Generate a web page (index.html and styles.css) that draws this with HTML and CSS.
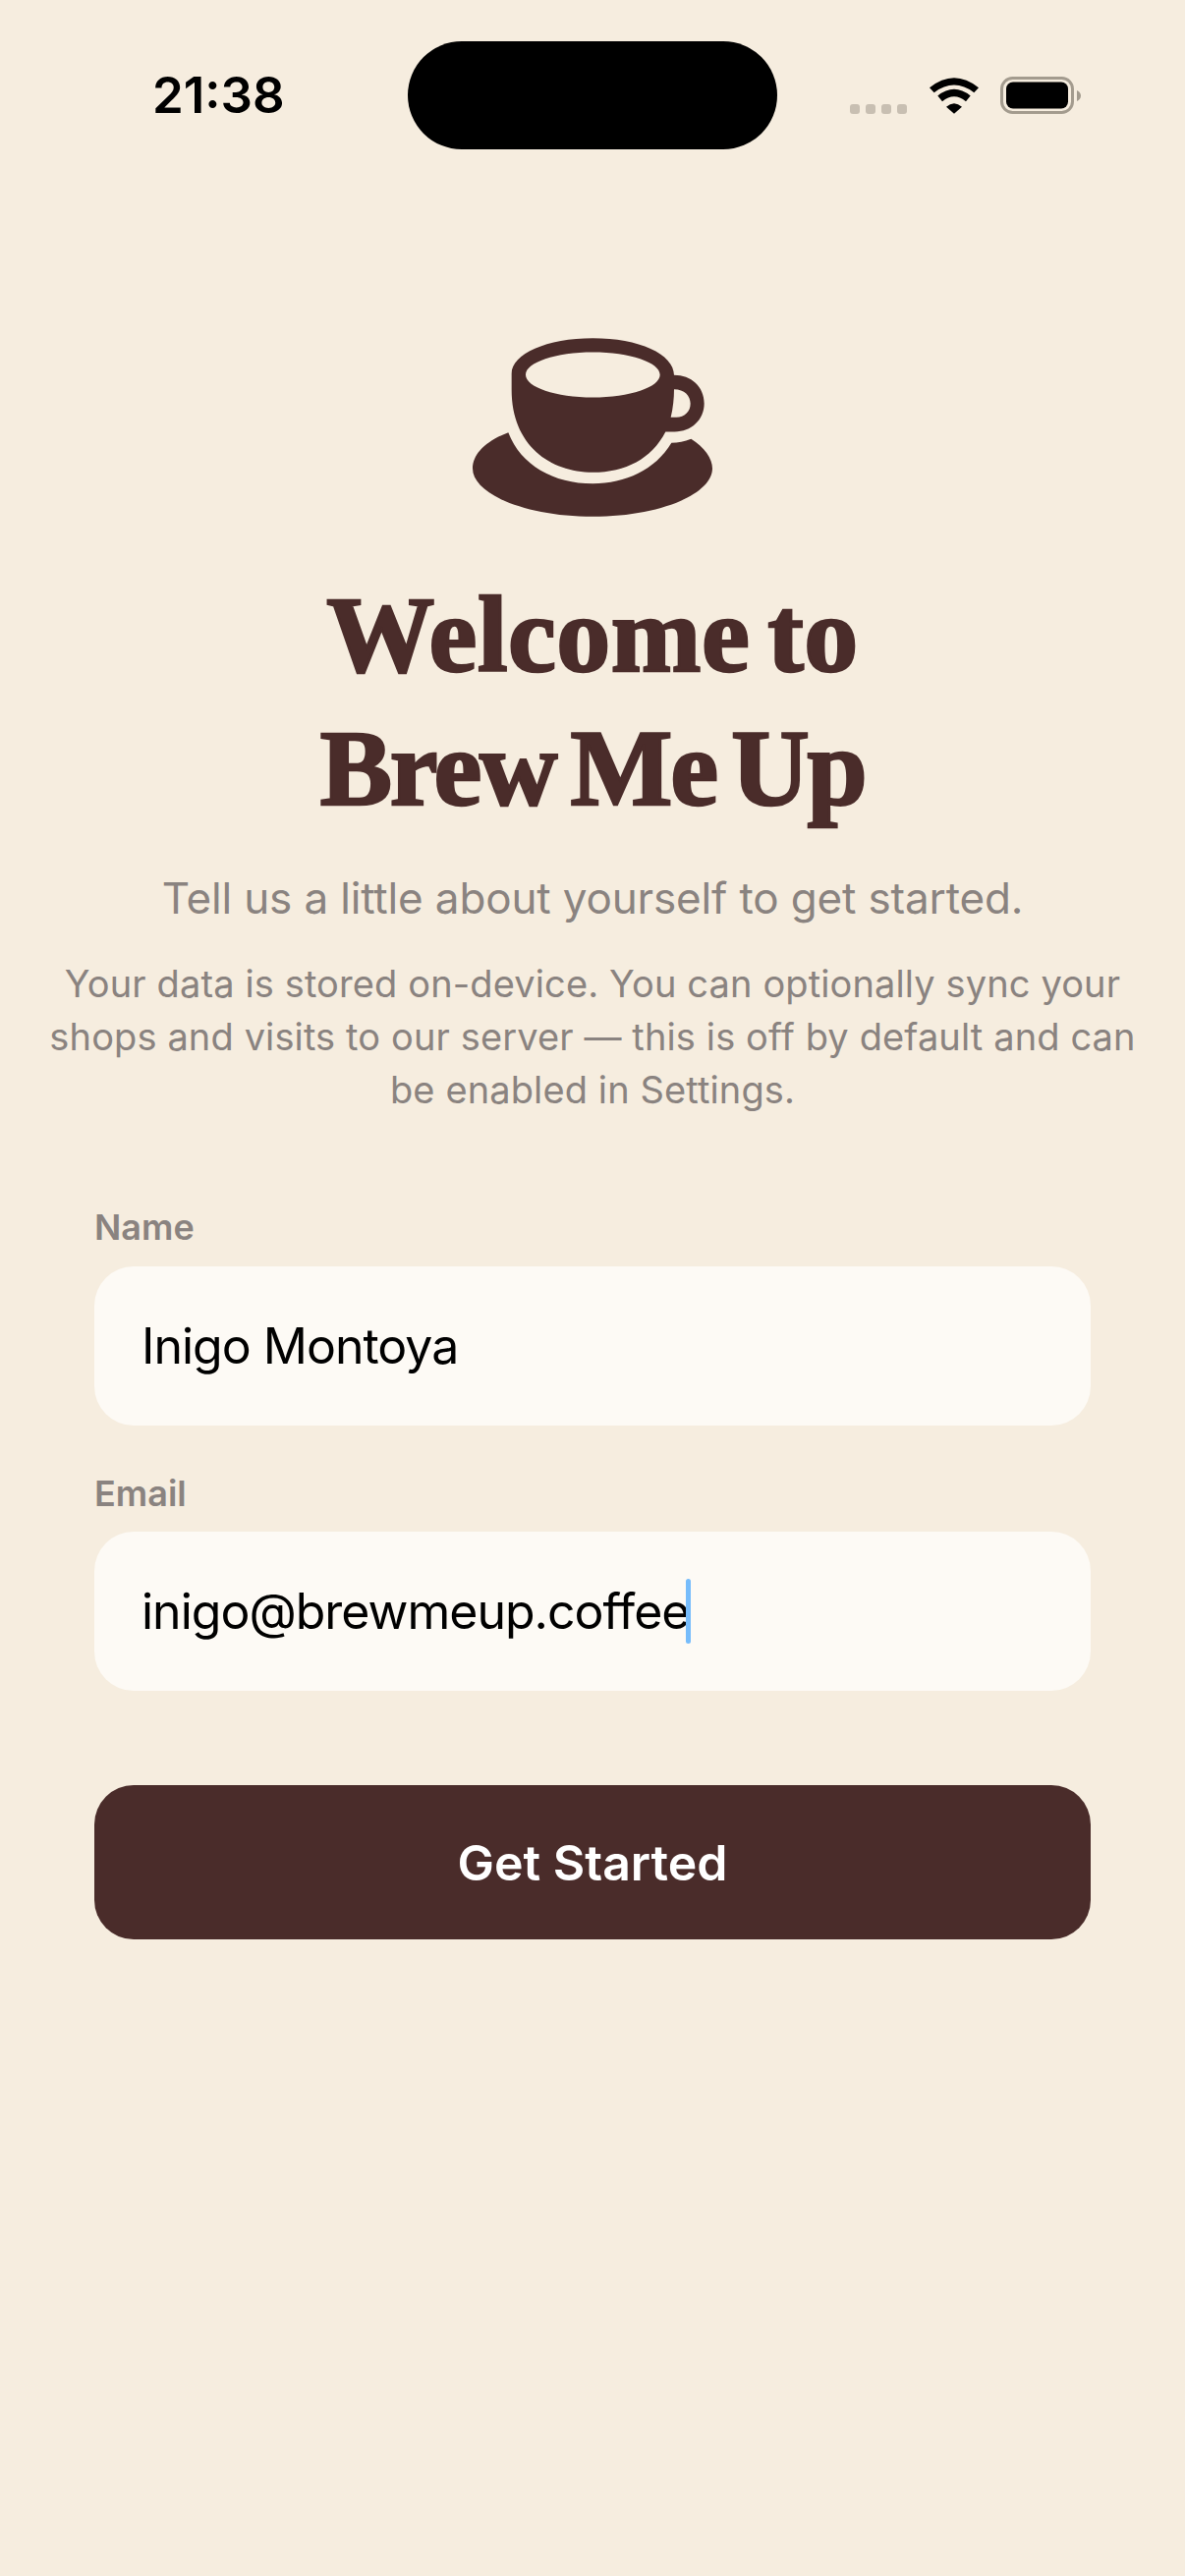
FILE: index.html
```html
<!DOCTYPE html>
<html lang="en">
<head>
<meta charset="utf-8">
<title>Brew Me Up</title>
<link rel="stylesheet" href="styles.css">
</head>
<body>
<header class="status">
  <div class="time">21:38</div>
  <div class="island"></div>
  <div class="status-icons">
    <div class="dots"><i></i><i></i><i></i><i></i></div>
    <svg class="wifi" viewBox="347 88 150 110"><path d="M347 118Q422 58 497 118L483 133Q422 87 361 133Z"/><path d="M372 143Q422 103 472 143L458 160Q422 130 386 160Z"/><path d="M398 177Q422 155 446 177L422 198Z"/></svg>
    <svg class="battery" viewBox="0 0 82 38"><rect class="batt-frame" x="1.5" y="1.5" width="72" height="35" rx="11"/><rect x="6" y="5.5" width="63" height="27" rx="7"/><path class="batt-tip" d="M78 14C80.500 15 82 17 82 19.500C82 22 80.500 24 78 25Z"/></svg>
  </div>
</header>
<main class="main">
  <svg class="cup" viewBox="93 72 732 545">
    <path fill-rule="evenodd" d="M212 180C212 120 320 72 460 72C600 72 708 120 708 185C760 185 800 220 800 272C800 322 760 358 710 358L682 358C640 440 560 482 460 482C330 482 212 400 212 230ZM255 184C255 222 347 253 460 253C573 253 665 222 665 184C665 146 573 115 460 115C347 115 255 146 255 184ZM708 228C708 255 705 285 698 314L715 314C740 314 758 297 758 272C758 248 740 228 708 228Z"/>
    <path d="M202 360C135 385 93 425 93 470C93 550 260 617 460 617C660 617 825 550 825 470C825 440 800 405 760 380C740 388 720 392 700 392C650 475 560 516 460 516C340 516 240 460 202 360Z"/>
  </svg>
  <h1 class="title"><span class="line-one">Welcome to</span><br><span class="line-two">Brew Me Up</span></h1>
  <p class="subtitle">Tell us a little about yourself to get started.</p>
  <p class="note">Your data is stored on-device. You can optionally sync your shops and visits to our server — this is off by default and can be enabled in Settings.</p>
  <form class="form">
    <div class="label">Name</div>
    <div class="field">Inigo Montoya</div>
    <div class="label label-email">Email</div>
    <div class="field">inigo@brewmeup.coffee<span class="caret"></span></div>
    <div class="button">Get Started</div>
  </form>
</main>
</body>
</html>
```
FILE: styles.css
```css
* { box-sizing: border-box; }
html, body { margin: 0; height: 100%; }
body {
  width: 1206px;
  height: 2622px;
  background: #f6eddf;
  font-family: Inter, "Liberation Sans", sans-serif;
  overflow: hidden;
}
.status {
  display: flex;
  align-items: center;
  height: 152px;
  padding: 42px 0 0 155px;
}
.time {
  width: 260px;
  font-size: 51px;
  font-weight: 600;
  line-height: 60px;
  color: #000;
}
.island {
  width: 376px;
  height: 110px;
  border-radius: 55px;
  background: #000;
}
.status-icons {
  display: flex;
  align-items: flex-end;
  height: 38px;
  margin-left: 74px;
}
.dots { display: flex; gap: 6px; margin-right: 23px; }
.dots i {
  display: block;
  width: 10px;
  height: 10px;
  border-radius: 3px;
  background: #c8bfb2;
}
.wifi { width: 50px; height: 37px; margin-right: 22px; fill: #000; }
.battery { width: 82px; height: 38px; fill: #000; }
.batt-frame { fill: none; stroke: #a39b8e; stroke-width: 3; }
.batt-tip { fill: #a39b8e; }
.main {
  display: flex;
  flex-direction: column;
  align-items: center;
}
.cup { width: 244px; height: 182px; margin-top: 192px; fill: #4a2c2a; }
.title {
  margin: 52px 0 0;
  font-family: "Liberation Serif", serif;
  font-size: 110px;
  font-weight: 700;
  line-height: 136px;
  text-align: center;
  color: #4a2c2a;
  word-spacing: -10px;
  -webkit-text-stroke: 2.5px #4a2c2a;
}
.line-one { letter-spacing: 0.5px; }
.line-two { letter-spacing: -2.2px; }
.subtitle {
  margin: 34px 0 0;
  font-size: 44px;
  line-height: 60px;
  letter-spacing: -0.15px;
  color: #8a8380;
}
.note {
  width: 1130px;
  margin: 30px 0 0;
  font-size: 38px;
  line-height: 54px;
  letter-spacing: 0.12px;
  text-align: center;
  color: #8a8380;
}
.form { width: 1014px; margin-top: 91px; }
.label {
  font-size: 36px;
  font-weight: 600;
  line-height: 44px;
  color: #8a8380;
  margin-bottom: 18px;
}
.label-email { margin-top: 47px; margin-bottom: 17px; }
.field {
  display: flex;
  align-items: center;
  height: 162px;
  padding-left: 48px;
  border-radius: 40px;
  background: #fdfaf5;
  font-size: 50px;
  letter-spacing: -1px;
  color: #000;
}
.caret {
  width: 5px;
  height: 66px;
  margin-left: -3px;
  border-radius: 3px;
  background: #76bcfb;
}
.button {
  display: flex;
  align-items: center;
  justify-content: center;
  height: 157px;
  margin-top: 96px;
  border-radius: 40px;
  background: #4a2c2a;
  font-size: 50px;
  font-weight: 600;
  color: #fff;
}
```
